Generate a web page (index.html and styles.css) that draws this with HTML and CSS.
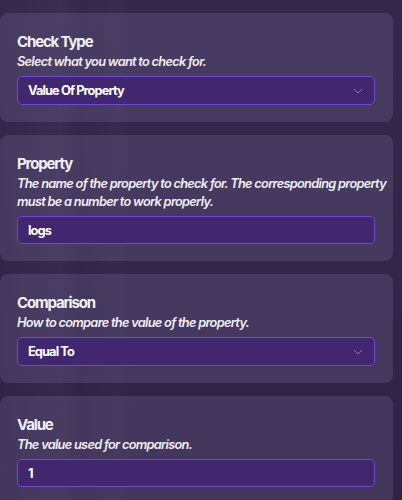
FILE: index.html
```html
<!DOCTYPE html>
<html>
<head>
<meta charset="utf-8">
<link rel="stylesheet" href="styles.css">
</head>
<body>
<div class="page">
  <div class="card">
    <div class="title">Check Type</div>
    <div class="desc">Select what you want to check for.</div>
    <div class="field select">
      <span>Value Of Property</span>
      <svg class="chev" width="10" height="6" viewBox="0 0 10 6"><path d="M1 1 L5 5 L9 1" fill="none" stroke="#8a7aa8" stroke-width="1"/></svg>
    </div>
  </div>
  <div class="card">
    <div class="title">Property</div>
    <div class="desc">The name of the property to check for. The corresponding property must be a number to work properly.</div>
    <div class="field input"><span>logs</span></div>
  </div>
  <div class="card">
    <div class="title">Comparison</div>
    <div class="desc">How to compare the value of the property.</div>
    <div class="field select">
      <span>Equal To</span>
      <svg class="chev" width="10" height="6" viewBox="0 0 10 6"><path d="M1 1 L5 5 L9 1" fill="none" stroke="#8a7aa8" stroke-width="1"/></svg>
    </div>
  </div>
  <div class="card">
    <div class="title">Value</div>
    <div class="desc">The value used for comparison.</div>
    <div class="field input"><span>1</span></div>
  </div>
</div>
</body>
</html>
```
FILE: styles.css
```css
html, body {
  margin: 0;
  padding: 0;
  height: 100%;
}
body {
  background: #30234a;
  background-image:
    linear-gradient(90deg, rgba(255,255,255,0) 0px, rgba(255,255,255,0.03) 60px, rgba(255,255,255,0) 80px, rgba(255,255,255,0.02) 120px, rgba(255,255,255,0) 130px),
    linear-gradient(180deg, #34284b 0%, #2e2245 100%);
  font-family: Inter, "Liberation Sans", sans-serif;
  color: #f2f0f7;
  overflow: hidden;
}
.page {
  display: flex;
  flex-direction: column;
  gap: 13px;
  padding: 13px 9px 0 0;
}
.card {
  background: rgba(110, 95, 140, 0.35);
  border-radius: 8px;
  padding: 19px 18px 17px 17px;
  display: flex;
  flex-direction: column;
}
.title {
  font-size: 15px;
  font-weight: 700;
  line-height: 20px;
  letter-spacing: -1.15px;
}
.desc {
  font-size: 12.8px;
  font-style: italic;
  font-weight: 600;
  line-height: 18px;
  letter-spacing: -0.72px;
  color: #f0eef5;
  margin-top: 1px;
  margin-bottom: 5px;
  margin-right: -14px;
}
.field {
  height: 29px;
  box-sizing: border-box;
  border: 1px solid #7149cc;
  background: #41276f;
  border-radius: 5px;
  padding: 0 10px 0 10px;
  display: flex;
  align-items: center;
  justify-content: space-between;
  font-size: 12.8px;
  font-weight: 700;
  letter-spacing: -0.9px;
  color: #ffffff;
}
.input {
  height: 28px;
}
.chev {
  display: block;
  margin-right: 1px;
}
```
